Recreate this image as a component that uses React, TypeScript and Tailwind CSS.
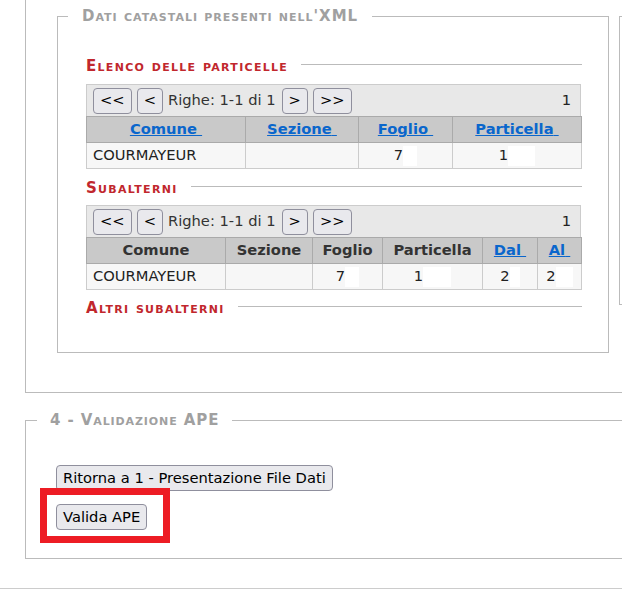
import React from "react";

type Col = { label: string; w: number; link?: boolean };

const particelleCols: Col[] = [
  { label: "Comune", w: 159, link: true },
  { label: "Sezione", w: 113, link: true },
  { label: "Foglio", w: 94, link: true },
  { label: "Particella", w: 129, link: true },
];

const subalterniCols: Col[] = [
  { label: "Comune", w: 139 },
  { label: "Sezione", w: 87 },
  { label: "Foglio", w: 70 },
  { label: "Particella", w: 100 },
  { label: "Dal", w: 55, link: true },
  { label: "Al", w: 44, link: true },
];

// cella: valore + campo bianco (larghezza in px)
type Cell = { v: string; box?: number; left?: boolean };

const particelleRow: Cell[] = [
  { v: "COURMAYEUR", left: true },
  { v: "" },
  { v: "7", box: 14 },
  { v: "1", box: 27 },
];

const subalterniRow: Cell[] = [
  { v: "COURMAYEUR", left: true },
  { v: "" },
  { v: "7", box: 14 },
  { v: "1", box: 28 },
  { v: "2", box: 10 },
  { v: "2", box: 17 },
];

function Btn({ children, className = "" }: { children: React.ReactNode; className?: string }) {
  return (
    <button
      type="button"
      className={`h-[26px] px-[6px] rounded-[4px] border border-[#8f8f9d] bg-[#e9e9ed] text-black leading-none whitespace-nowrap ${className}`}
    >
      {children}
    </button>
  );
}

function Heading({ children }: { children: React.ReactNode }) {
  return (
    <div className="flex items-center gap-[13px]">
      <h3 className="text-[15px] tracking-[1.3px] font-bold text-[#c1272d] [font-variant-caps:small-caps] leading-[18px] whitespace-nowrap">
        {children}
      </h3>
      <div className="flex-1 border-t border-[#bbbbbb] -mt-[3px]" />
    </div>
  );
}

function Pager() {
  return (
    <div className="flex items-center h-[32px] px-[6px] bg-[#e8e8e8] border border-b-0 border-[#cccccc]">
      <Btn>&lt;&lt;</Btn>
      <Btn className="ml-[5px]">&lt;</Btn>
      <span className="ml-[5px] text-[#333]">Righe: 1-1 di 1</span>
      <Btn className="ml-[6px]">&gt;</Btn>
      <Btn className="ml-[5px]">&gt;&gt;</Btn>
      <span className="ml-auto pr-[3px] text-[#222]">1</span>
    </div>
  );
}

function DataTable({ cols, row }: { cols: Col[]; row: Cell[] }) {
  return (
    <div className="w-[495px]">
      <Pager />
      <table className="w-full table-fixed border-collapse border border-[#cccccc]">
        <colgroup>
          {cols.map((c) => (
            <col key={c.label} style={{ width: c.w }} />
          ))}
        </colgroup>
        <thead>
          <tr className="h-[26px] bg-[#c9c9c9]">
            {cols.map((c) => (
              <th key={c.label} className="border border-[#aaaaaa] font-bold text-[#333] text-center">
                {c.link ? (
                  <a href="#" className="text-[#0a66cc] underline">
                    {c.label}&nbsp;
                  </a>
                ) : (
                  c.label
                )}
              </th>
            ))}
          </tr>
        </thead>
        <tbody>
          <tr className="h-[26px] bg-[#f7f7f7]">
            {row.map((cell, i) => (
              <td
                key={i}
                className={`border border-[#cccccc] text-[#222] ${cell.left ? "text-left pl-[6px]" : "text-center"}`}
              >
                {cell.v}
                {cell.box ? (
                  <span className="inline-block h-[20px] bg-white align-middle" style={{ width: cell.box }} />
                ) : null}
              </td>
            ))}
          </tr>
        </tbody>
      </table>
    </div>
  );
}

export default function App() {
  return (
    <div className="relative w-[622px] h-[598px] overflow-hidden bg-white font-['DejaVu_Sans',Verdana,sans-serif] text-[14.7px]">
      {/* blocco superiore */}
      <div className="ml-[25px] w-[700px] border-l border-b border-[#bbbbbb] pl-[31px] pb-[39px] pt-[7px] flex items-start gap-[10px]">
        <fieldset className="w-[552px] shrink-0 border border-[#bbbbbb] p-0">
          <legend className="ml-[10px] px-[14px] text-[15px] tracking-[1px] leading-[18px] font-bold text-[#a0a0a0] [font-variant-caps:small-caps]">
            Dati catastali presenti nell'XML
          </legend>
          <div className="pl-[28px] pr-[26px] pt-[32px] pb-[35px]">
            <Heading>Elenco delle particelle</Heading>
            <div className="mt-[9px]">
              <DataTable cols={particelleCols} row={particelleRow} />
            </div>
            <div className="mt-[10px]">
              <Heading>Subalterni</Heading>
            </div>
            <div className="mt-[8px]">
              <DataTable cols={subalterniCols} row={subalterniRow} />
            </div>
            <div className="mt-[9px]">
              <Heading>Altri subalterni</Heading>
            </div>
          </div>
        </fieldset>
        <div className="mt-[9px] w-[200px] h-[289px] shrink-0 border border-[#bbbbbb]" />
      </div>

      {/* 4 - Validazione APE */}
      <fieldset className="mt-[18px] ml-[25px] w-[700px] border border-[#bbbbbb] p-0">
        <legend className="ml-[11px] px-[13px] text-[15px] tracking-[0.9px] leading-[18px] font-bold text-[#a0a0a0] [font-variant-caps:small-caps]">
          4 - Validazione APE
        </legend>
        <div className="pl-[30px] pt-[36px] pb-[28px] flex flex-col items-start gap-[13px]">
          <Btn className="h-[25px]">Ritorna a 1 - Presentazione File Dati</Btn>
          <Btn>Valida APE</Btn>
        </div>
      </fieldset>

      <div className="mt-[29px] w-full border-t border-[#cccccc]" />

      {/* evidenziazione */}
      <div className="absolute left-[40px] top-[488px] w-[130px] h-[55px] border-[7px] border-[#ed1c24] pointer-events-none" />
    </div>
  );
}
